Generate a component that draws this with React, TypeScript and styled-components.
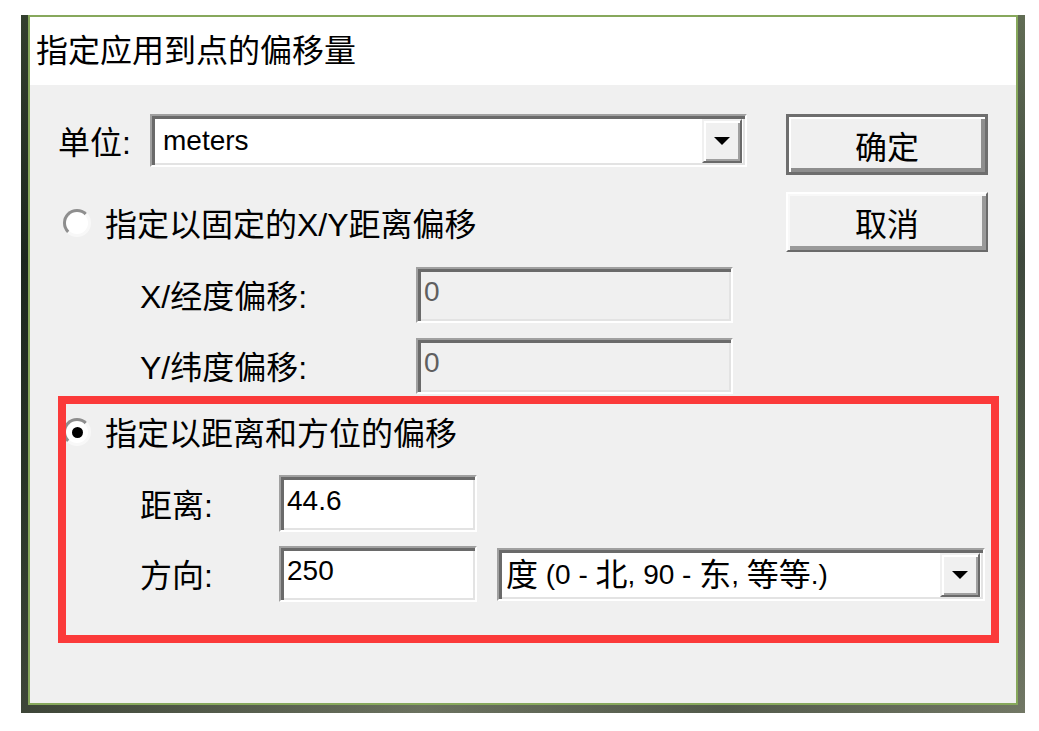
import React from "react";
import styled, { createGlobalStyle, css } from "styled-components";

const GlobalStyle = createGlobalStyle`
  html, body { margin: 0; padding: 0; background: #ffffff; }
  body {
    font-family: "Liberation Sans", "Noto Sans CJK SC", sans-serif;
    color: #000;
  }
`;

const Page = styled.div`
  width: 1039px;
  height: 731px;
  box-sizing: border-box;
  padding: 15px 0 0 21px;
  background: #ffffff;
`;

const Frame = styled.div`
  width: 1004px;
  height: 698px;
  box-sizing: border-box;
  padding: 0 7px 8px 7px;
  display: flex;
  background:
    linear-gradient(90deg, rgba(20, 30, 20, 0.55) 0%, rgba(90, 100, 80, 0.2) 40%, rgba(40, 50, 40, 0.4) 70%, rgba(120, 125, 105, 0.3) 100%),
    linear-gradient(180deg, #58664c 0%, #26322a 35%, #3f4c3c 65%, #6f7563 100%);
`;

const Window = styled.div`
  flex: 1;
  display: flex;
  flex-direction: column;
  border: 2px solid #87a85c;
  background: #f0f0f0;
`;

const TitleBar = styled.div`
  height: 68px;
  flex: none;
  box-sizing: border-box;
  display: flex;
  align-items: center;
  padding: 0 0 6px 6px;
  background: #ffffff;
  font-family: "Noto Sans CJK SC", sans-serif;
  font-size: 32px;
  line-height: 36px;
`;

const Body = styled.div`
  position: relative;
  flex: 1;
  padding: 29px 0 0 28px;
  font-size: 32px;
  line-height: 36px;
`;

const TopSection = styled.div`
  display: flex;
  align-items: flex-start;
`;

const LeftColumn = styled.div`
  display: flex;
  flex-direction: column;
`;

const ButtonColumn = styled.div`
  display: flex;
  flex-direction: column;
  gap: 17px;
  margin-left: 39px;
`;

const Row = styled.div<{ $mt?: number; $h: number; $indent?: number }>`
  display: flex;
  align-items: center;
  height: ${(p) => p.$h}px;
  margin-top: ${(p) => p.$mt ?? 0}px;
  padding-left: ${(p) => p.$indent ?? 0}px;
`;

const Label = styled.div<{ $w: number }>`
  width: ${(p) => p.$w}px;
  flex: none;
  padding-top: 4px;
  white-space: nowrap;
`;

const RadioLabel = styled.div`
  margin-left: 14px;
  padding-top: 3px;
  white-space: nowrap;
`;

const Latin = styled.span`
  font-size: 28px;
`;

const Radio = styled.span<{ $checked?: boolean }>`
  width: 28px;
  height: 28px;
  flex: none;
  box-sizing: border-box;
  margin-left: 5px;
  border-radius: 50%;
  border: 3px solid;
  border-color: #8e8e8e #f8f8f8 #f8f8f8 #8e8e8e;
  background: #ffffff;
  display: flex;
  align-items: center;
  justify-content: center;
  &::after {
    content: "";
    display: ${(p) => (p.$checked ? "block" : "none")};
    width: 11px;
    height: 11px;
    border-radius: 50%;
    background: #000;
  }
`;

const sunken = css`
  box-sizing: border-box;
  border: 2px solid;
  border-color: #a0a0a0 #ffffff #ffffff #a0a0a0;
  box-shadow: inset 3px 3px 0 #6a6a6a, inset -2px -2px 0 #e3e3e3;
`;

const Field = styled.div<{ $w: number; $h: number; $disabled?: boolean }>`
  ${sunken};
  width: ${(p) => p.$w}px;
  height: ${(p) => p.$h}px;
  flex: none;
  display: flex;
  align-items: center;
  padding: 0 0 6px 6px;
  font-size: 28px;
  background: ${(p) => (p.$disabled ? "#f0f0f0" : "#ffffff")};
  color: ${(p) => (p.$disabled ? "#5f5f5f" : "#000")};
`;

const Combo = styled.div<{ $w: number; $ml?: number }>`
  ${sunken};
  width: ${(p) => p.$w}px;
  height: 53px;
  flex: none;
  margin-left: ${(p) => p.$ml ?? 0}px;
  display: flex;
  padding: 3px 3px 2px 3px;
  background: #ffffff;
`;

const ComboText = styled.div<{ $pl: number }>`
  flex: 1;
  display: flex;
  align-items: center;
  padding-left: ${(p) => p.$pl}px;
  white-space: pre;
`;

const DropButton = styled.div`
  width: 40px;
  flex: none;
  box-sizing: border-box;
  display: flex;
  align-items: center;
  justify-content: center;
  background: #f0f0f0;
  border: 2px solid;
  border-color: #f0f0f0 #696969 #696969 #f0f0f0;
  box-shadow: inset 2px 2px 0 #ffffff, inset -2px -2px 0 #a0a0a0;
`;

const Button = styled.div<{ $default?: boolean; $h: number }>`
  width: 202px;
  height: ${(p) => p.$h}px;
  box-sizing: border-box;
  display: flex;
  align-items: center;
  justify-content: center;
  background: #f0f0f0;
  font-family: "Noto Sans CJK SC", sans-serif;
  font-size: 32px;
  line-height: 36px;
  ${(p) =>
    p.$default
      ? css`
          border: 3px solid #6e6e6e;
          box-shadow: inset 2px 2px 0 #ffffff, inset -4px -4px 0 #8e8e8e;
        `
      : css`
          border: 2px solid;
          border-color: #ffffff #6a6a6a #6a6a6a #ffffff;
          box-shadow: inset 2px 2px 0 #f8f8f8, inset -4px -4px 0 #9a9a9a;
        `}
`;

const Highlight = styled.div`
  position: absolute;
  left: 28px;
  top: 311px;
  width: 941px;
  height: 247px;
  box-sizing: border-box;
  border: 8px solid #fb3a3a;
  pointer-events: none;
`;

const Arrow = () => (
  <svg width="18" height="10" viewBox="0 0 18 10">
    <polygon points="1,1 17,1 9,9" fill="#000" />
  </svg>
);

export default function App() {
  return (
    <>
      <GlobalStyle />
      <Page>
        <Frame>
          <Window>
            <TitleBar>指定应用到点的偏移量</TitleBar>
            <Body>
              <TopSection>
                <LeftColumn>
                  <Row $h={53}>
                    <Label $w={92}>单位:</Label>
                    <Combo $w={597}>
                      <ComboText $pl={8}>
                        <Latin>meters</Latin>
                      </ComboText>
                      <DropButton>
                        <Arrow />
                      </DropButton>
                    </Combo>
                  </Row>
                  <Row $h={32} $mt={40}>
                    <Radio />
                    <RadioLabel>指定以固定的X/Y距离偏移</RadioLabel>
                  </Row>
                  <Row $h={56} $mt={28} $indent={82}>
                    <Label $w={276}>X/经度偏移:</Label>
                    <Field $w={317} $h={56} $disabled>
                      0
                    </Field>
                  </Row>
                  <Row $h={56} $mt={15} $indent={82}>
                    <Label $w={276}>Y/纬度偏移:</Label>
                    <Field $w={317} $h={56} $disabled>
                      0
                    </Field>
                  </Row>
                </LeftColumn>
                <ButtonColumn>
                  <Button $default $h={61}>确定</Button>
                  <Button $h={60}>取消</Button>
                </ButtonColumn>
              </TopSection>
              <Row $h={32} $mt={22}>
                <Radio $checked />
                <RadioLabel>指定以距离和方位的偏移</RadioLabel>
              </Row>
              <Row $h={57} $mt={27} $indent={82}>
                <Label $w={139}>距离:</Label>
                <Field $w={198} $h={57}>44.6</Field>
              </Row>
              <Row $h={56} $mt={14} $indent={82}>
                <Label $w={139}>方向:</Label>
                <Field $w={198} $h={56}>250</Field>
                <Combo $w={488} $ml={20}>
                  <ComboText $pl={4}>
                    度<Latin> (0 - </Latin>北<Latin>, 90 - </Latin>东<Latin>, </Latin>等等<Latin>.)</Latin>
                  </ComboText>
                  <DropButton>
                    <Arrow />
                  </DropButton>
                </Combo>
              </Row>
              <Highlight />
            </Body>
          </Window>
        </Frame>
      </Page>
    </>
  );
}
